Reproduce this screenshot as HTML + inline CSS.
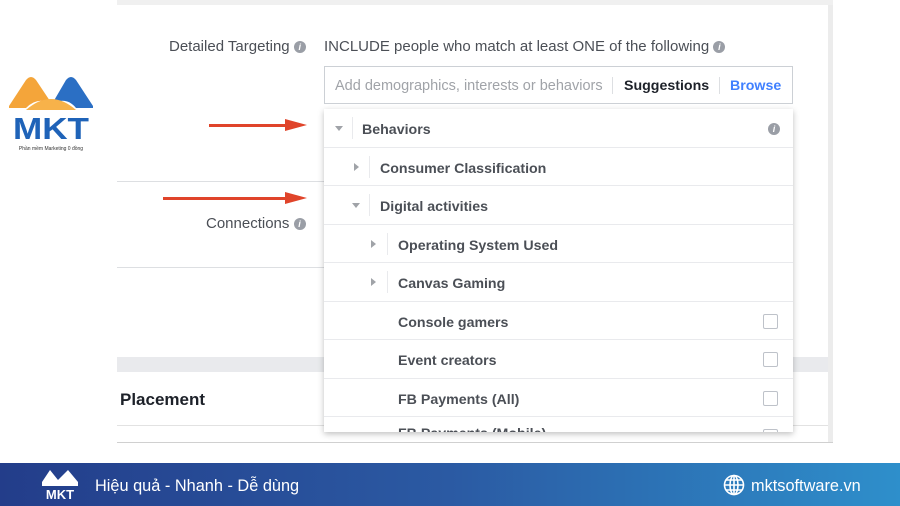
<!DOCTYPE html>
<html><head><meta charset="utf-8"><style>
*{margin:0;padding:0;box-sizing:border-box}
body{width:900px;height:506px;position:relative;overflow:hidden;background:#fff;font-family:"Liberation Sans",Arial,sans-serif;}
.abs{position:absolute}
.t{color:#4b4f56;font-size:15px;white-space:nowrap}
.b{font-weight:bold;font-size:14.2px}
.info{display:inline-block;width:12px;height:12px;border-radius:50%;background:#9a9ea6;color:#fff;font-size:9px;text-align:center;line-height:12px;font-style:italic;font-weight:bold;vertical-align:middle}
.row{position:absolute;left:0;right:0;height:38.5px;border-bottom:1px solid #e9eaed}
.row span{position:absolute;top:13px}
.tri{position:absolute;top:15px;width:0;height:0}
.right{border-top:4px solid transparent;border-bottom:4px solid transparent;border-left:5px solid #a0a3a8}
.down{border-left:4px solid transparent;border-right:4px solid transparent;border-top:5px solid #a0a3a8;top:17px}
.sep{position:absolute;top:8px;width:1px;height:22px;background:#e9eaed}
.cb{position:absolute;right:15px;top:12px;width:15px;height:15px;border:1px solid #bec2c9;border-radius:2px;background:#fff}
</style></head><body>
<div class="abs" style="left:117px;top:0;width:716px;height:5px;background:#f0f0f0"></div>
<div class="abs" style="left:828px;top:5px;width:5px;height:438px;background:#ececec"></div>
<div class="abs" style="left:117px;top:442px;width:716px;height:1px;background:#d0d0d0"></div>
<div class="abs" style="left:117px;top:181px;width:207px;height:1px;background:#dddfe2"></div>
<div class="abs" style="left:117px;top:267px;width:207px;height:1px;background:#dddfe2"></div>
<div class="abs" style="left:117px;top:357px;width:711px;height:15px;background:#e9eaed"></div>
<div class="abs" style="left:117px;top:425px;width:711px;height:1px;background:#e2e2e2"></div>
<div class="abs t" style="left:120px;top:390px;font-size:17px;font-weight:bold;color:#1d2129">Placement</div>

<div class="abs t" style="left:169px;top:38px">Detailed Targeting <span class="info">i</span></div>
<div class="abs t" style="left:324px;top:38px">INCLUDE people who match at least ONE of the following <span class="info">i</span></div>
<div class="abs t" style="left:206px;top:215px">Connections <span class="info">i</span></div>

<div class="abs" style="left:324px;top:66px;width:469px;height:38px;border:1px solid #ccd0d5;background:#fff">
<span class="abs t" style="left:10px;top:11px;color:#a0a3a8;font-size:14.5px">Add demographics, interests or behaviors</span>
<div class="abs" style="left:287px;top:10px;width:1px;height:17px;background:#dddfe2"></div>
<span class="abs t b" style="left:299px;top:11px;color:#1d2129">Suggestions</span>
<div class="abs" style="left:394px;top:10px;width:1px;height:17px;background:#dddfe2"></div>
<span class="abs t b" style="left:405px;top:11px;color:#4080ff">Browse</span>
</div>

<div class="abs" style="left:209px;top:124px;width:80px;height:3px;background:#e0442a"></div>
<div class="abs" style="left:285px;top:119px;border-top:6px solid transparent;border-bottom:6px solid transparent;border-left:22px solid #e0442a"></div>
<div class="abs" style="left:163px;top:197px;width:124px;height:3px;background:#e0442a"></div>
<div class="abs" style="left:285px;top:192px;border-top:6px solid transparent;border-bottom:6px solid transparent;border-left:22px solid #e0442a"></div>

<div class="abs" style="left:324px;top:109px;width:469px;height:323px;background:#fff;box-shadow:0 2px 6px rgba(0,0,0,.25);overflow:hidden">
<div class="row" style="top:0"><i class="tri down" style="left:11px"></i><i class="sep" style="left:28px"></i><span class="t b" style="left:38px">Behaviors</span><span class="info" style="position:absolute;right:13px;top:14px">i</span></div>
<div class="row" style="top:38.5px"><i class="tri right" style="left:30px"></i><i class="sep" style="left:45px"></i><span class="t b" style="left:56px">Consumer Classification</span></div>
<div class="row" style="top:77px"><i class="tri down" style="left:28px"></i><i class="sep" style="left:45px"></i><span class="t b" style="left:56px">Digital activities</span></div>
<div class="row" style="top:115.5px"><i class="tri right" style="left:47px"></i><i class="sep" style="left:63px"></i><span class="t b" style="left:74px">Operating System Used</span></div>
<div class="row" style="top:154px"><i class="tri right" style="left:47px"></i><i class="sep" style="left:63px"></i><span class="t b" style="left:74px">Canvas Gaming</span></div>
<div class="row" style="top:192.5px"><span class="t b" style="left:74px">Console gamers</span><i class="cb"></i></div>
<div class="row" style="top:231px"><span class="t b" style="left:74px">Event creators</span><i class="cb"></i></div>
<div class="row" style="top:269.5px"><span class="t b" style="left:74px">FB Payments (All)</span><i class="cb"></i></div>
<div class="row" style="top:308px"><span class="t b" style="left:74px;top:9px">FB Payments (Mobile)</span><i class="cb"></i></div>
</div>

<svg class="abs" style="left:6px;top:74px" width="90" height="80" viewBox="0 0 90 80">
<path d="M3 32 L20 6 Q25 0 30 6 L46 30 Q32 22 20 34 L3 34Z" fill="#f4a53a"/>
<path d="M46 30 L60 6 Q65 0 70 6 L87 32 L87 34 L70 34 Q60 22 46 30Z" fill="#2b6fc4"/>
<path d="M20 36 Q45 14 70 36Z" fill="#f7b24a"/>
<text x="45" y="65" text-anchor="middle" font-family="Liberation Sans" font-weight="bold" font-size="31" fill="#1f63b8" textLength="76" lengthAdjust="spacingAndGlyphs">MKT</text>
<text x="45" y="76" text-anchor="middle" font-family="Liberation Sans" font-size="5" fill="#333">Phần mềm Marketing 0 đồng</text>
</svg>

<div class="abs" style="left:0;top:463px;width:900px;height:43px;background:linear-gradient(90deg,#233d8a,#2b5aa3 50%,#2e8fcb)"></div>
<svg class="abs" style="left:38px;top:466px" width="44" height="38" viewBox="0 0 44 38">
<path d="M4 16 L12 4 L20 14 L22 12 L30 4 L40 16 L40 20 L4 20Z" fill="#fff"/>
<text x="22" y="33" text-anchor="middle" font-family="Liberation Sans" font-weight="bold" font-size="13" fill="#fff">MKT</text>
</svg>
<div class="abs" style="left:95px;top:476px;color:#fff;font-size:17px;white-space:nowrap;transform:scaleX(.96);transform-origin:left">Hiệu quả - Nhanh - Dễ dùng</div>
<svg class="abs" style="left:723px;top:474px" width="22" height="22" viewBox="0 0 22 22" fill="none" stroke="#fff" stroke-width="1.6">
<circle cx="11" cy="11" r="9.5"/><ellipse cx="11" cy="11" rx="4" ry="9.5"/><path d="M1.5 11H20.5M3 6H19M3 16H19M11 1.5V20.5"/></svg>
<div class="abs" style="left:751px;top:476px;color:#fff;font-size:17px;white-space:nowrap;transform:scaleX(.96);transform-origin:left">mktsoftware.vn</div>
</body></html>
